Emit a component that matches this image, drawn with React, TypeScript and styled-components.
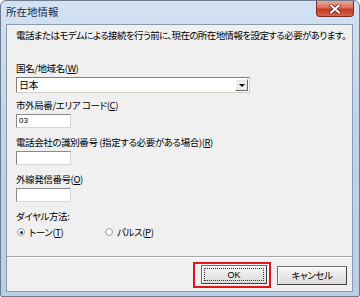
import styled, { createGlobalStyle } from 'styled-components';

const GlobalStyle = createGlobalStyle`
  html, body {
    margin: 0;
    padding: 0;
    background: #ffffff;
  }
  body {
    font-family: "Noto Sans CJK JP", "Noto Sans", sans-serif;
  }
`;

const Window = styled.div`
  box-sizing: border-box;
  width: 360px;
  height: 297px;
  border: 1px solid #6d7c8f;
  border-radius: 6px 6px 2px 2px;
  background: linear-gradient(180deg, #d3e2f3 0%, #c0d5ec 40%, #b8cfe8 100%);
  padding: 0 6px 4px 5px;
  display: flex;
  flex-direction: column;
  font-feature-settings: "palt";
`;

const TitleBar = styled.div`
  height: 23px;
  display: flex;
  align-items: flex-start;
  justify-content: space-between;
`;

const Title = styled.span`
  margin-top: 4px;
  font-size: 10.5px;
  line-height: 13px;
  color: #1c2a3a;
`;

const CloseButton = styled.div`
  width: 38px;
  height: 16px;
  margin-right: -1px;
  box-sizing: border-box;
  border: 1px solid #7a2d24;
  border-top: none;
  border-radius: 0 0 4px 4px;
  background: linear-gradient(180deg, #eba597 0%, #dc705b 45%, #c53a22 55%, #d8644a 100%);
  display: flex;
  align-items: center;
  justify-content: center;
`;

const Client = styled.div`
  flex: 1;
  box-sizing: border-box;
  background: #f0f0f0;
  border: 1px solid #8b9bad;
  display: flex;
  flex-direction: column;
  font-size: 9.5px;
  letter-spacing: -0.4px;
  color: #000;
`;

const Body = styled.div`
  flex: 1;
  padding: 4px 9px 0 9px;
  display: flex;
  flex-direction: column;
`;

const Intro = styled.div`
  line-height: 12px;
  letter-spacing: -0.6px;
  white-space: nowrap;
`;

const Field = styled.div<{ $top: number }>`
  margin-top: ${(p) => p.$top}px;
  display: flex;
  flex-direction: column;
  align-items: flex-start;
  gap: 3px;
`;

const Label = styled.span`
  line-height: 12px;
  white-space: nowrap;
`;

const Key = styled.span`
  text-decoration: underline;
`;

const Combo = styled.div`
  box-sizing: border-box;
  width: 234px;
  height: 16px;
  background: #ffffff;
  border: 1px solid #7f7f7f;
  border-right-color: #d4d0c8;
  border-bottom-color: #d4d0c8;
  display: flex;
  align-items: center;
  justify-content: space-between;
  padding: 0 1px 0 2px;
  line-height: 12px;
  font-size: 10px;
`;

const ComboArrow = styled.div`
  box-sizing: border-box;
  width: 13px;
  height: 12px;
  background: #ececec;
  border: 1px solid #ffffff;
  border-right-color: #6a6a6a;
  border-bottom-color: #6a6a6a;
  display: flex;
  align-items: center;
  justify-content: center;
  &::after {
    content: '';
    border-left: 3px solid transparent;
    border-right: 3px solid transparent;
    border-top: 3px solid #000;
  }
`;

const TextBox = styled.div`
  box-sizing: border-box;
  width: 55px;
  height: 14px;
  background: #ffffff;
  border: 1px solid #8a8a8a;
  border-right-color: #d8d8d8;
  border-bottom-color: #d8d8d8;
  font-family: "Liberation Sans", sans-serif;
  font-size: 8px;
  letter-spacing: 0;
  line-height: 12px;
  padding-left: 2px;
`;

const RadioRow = styled.div`
  margin-top: 4px;
  display: flex;
  align-items: center;
  height: 12px;
`;

const RadioItem = styled.label<{ $width: number }>`
  width: ${(p) => p.$width}px;
  display: flex;
  align-items: center;
  gap: 4px;
  line-height: 12px;
  white-space: nowrap;
`;

const RadioDot = styled.span<{ $checked?: boolean }>`
  box-sizing: border-box;
  width: 8px;
  height: 8px;
  margin-left: 1px;
  border-radius: 50%;
  border: 1px solid #9a9a9a;
  background: #ffffff;
  display: flex;
  align-items: center;
  justify-content: center;
  &::after {
    content: '';
    width: 3px;
    height: 3px;
    border-radius: 50%;
    background: ${(p) => (p.$checked ? '#2a2a2a' : 'transparent')};
  }
`;

const ButtonBar = styled.div`
  border-top: 1px solid #a6a6a6;
  box-shadow: inset 0 1px 0 #ffffff;
  padding: 5px 5px 3px 0;
  display: flex;
  justify-content: flex-end;
  align-items: center;
`;

const Highlight = styled.div`
  border: 2px solid #e4141b;
  padding: 1px 2px 2px 6px;
  display: flex;
`;

const Button = styled.div<{ $width: number; $focused?: boolean }>`
  box-sizing: border-box;
  width: ${(p) => p.$width}px;
  height: 19px;
  margin-left: ${(p) => (p.$focused ? 0 : 6)}px;
  border: 1px solid #707070;
  border-right-color: #404040;
  border-bottom-color: #404040;
  background: linear-gradient(180deg, #f6f6f6 0%, #e8e8e8 50%, #dcdcdc 100%);
  box-shadow: inset 1px 1px 0 #ffffff;
  display: flex;
  align-items: center;
  justify-content: center;
  line-height: 12px;
  position: relative;
  ${(p) =>
    p.$focused
      ? `&::after {
    content: '';
    position: absolute;
    inset: 2px;
    border: 1px dotted #333;
  }`
      : ''}
`;

const ButtonText = styled.span<{ $latin?: boolean }>`
  font-family: ${(p) => (p.$latin ? '"Liberation Sans", sans-serif' : 'inherit')};
  font-size: ${(p) => (p.$latin ? '9px' : 'inherit')};
  letter-spacing: ${(p) => (p.$latin ? '0' : 'inherit')};
`;

export default function App() {
  return (
    <>
      <GlobalStyle />
      <Window>
        <TitleBar>
          <Title>所在地情報</Title>
          <CloseButton>
            <svg width="12" height="10" viewBox="0 0 12 10">
              <path d="M2 1.5 L10 8.5 M10 1.5 L2 8.5" stroke="#5a1a14" strokeWidth="3.4" strokeLinecap="square" />
              <path d="M2 1.5 L10 8.5 M10 1.5 L2 8.5" stroke="#ffffff" strokeWidth="2" strokeLinecap="square" />
            </svg>
          </CloseButton>
        </TitleBar>
        <Client>
          <Body>
            <Intro>電話またはモデムによる接続を行う前に、現在の所在地情報を設定する必要があります。</Intro>
            <Field $top={21}>
              <Label>国名/地域名(<Key>W</Key>)</Label>
              <Combo>
                <span>日本</span>
                <ComboArrow />
              </Combo>
            </Field>
            <Field $top={6}>
              <Label>市外局番/エリア コード(<Key>C</Key>)</Label>
              <TextBox>03</TextBox>
            </Field>
            <Field $top={8}>
              <Label>電話会社の識別番号 (指定する必要がある場合)(<Key>R</Key>)</Label>
              <TextBox />
            </Field>
            <Field $top={8}>
              <Label>外線発信番号(<Key>O</Key>)</Label>
              <TextBox />
            </Field>
            <Field $top={8}>
              <Label>ダイヤル方法:</Label>
            </Field>
            <RadioRow>
              <RadioItem $width={88}>
                <RadioDot $checked />
                <span>トーン(<Key>T</Key>)</span>
              </RadioItem>
              <RadioItem $width={60}>
                <RadioDot />
                <span>パルス(<Key>P</Key>)</span>
              </RadioItem>
            </RadioRow>
          </Body>
          <ButtonBar>
            <Highlight>
              <Button $width={66} $focused>
                <ButtonText $latin>OK</ButtonText>
              </Button>
            </Highlight>
            <Button $width={70}>
              <ButtonText>キャンセル</ButtonText>
            </Button>
          </ButtonBar>
        </Client>
      </Window>
    </>
  );
}
